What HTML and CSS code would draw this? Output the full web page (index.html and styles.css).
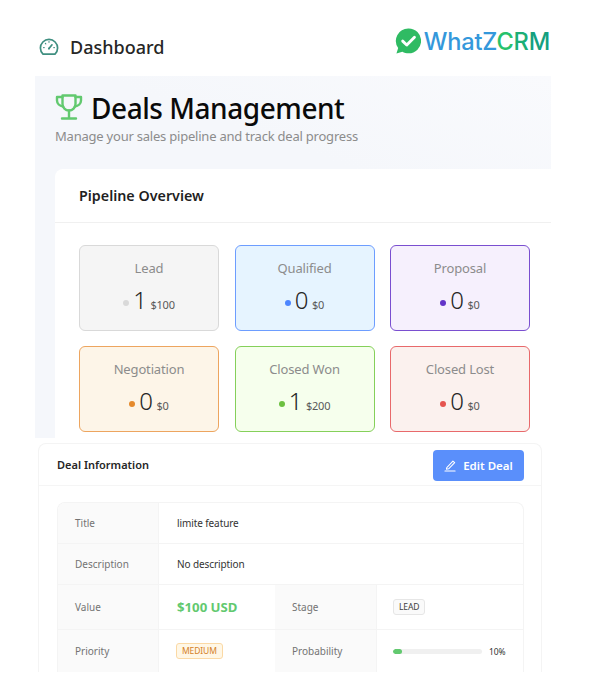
FILE: index.html
```html
<!DOCTYPE html>
<html lang="en">
<head>
<meta charset="utf-8">
<title>Deals Management</title>
<link rel="stylesheet" href="styles.css">
</head>
<body>
<div class="page">
  <header class="topbar">
    <div class="crumb">
      <svg class="gauge" viewBox="0 0 20 20" width="20" height="20" fill="none" stroke="#3f8f80" stroke-width="1.700" stroke-linecap="round">
        <path d="M4 17.200A8.600 8.600 0 1 1 16 17.200Z" stroke-linejoin="round"/>
        <path d="M10 11.500L13 7.800"/>
        <circle cx="10" cy="11.600" r="1" fill="#3f8f80" stroke="none"/>
        <path d="M4.600 10.600h.6M6.400 6.400l.4.4M10 4.600v.6M14.800 10.600h.6" stroke-width="1.200"/>
      </svg>
      <span class="crumb-text">Dashboard</span>
    </div>
    <div class="logo">
      <svg class="logo-mark" viewBox="0 0 27 27" width="26" height="26">
        <path d="M14.200 .5a12.900 12.900 0 0 1 0 25.800c-2.400 0-4.600-.6-6.500-1.700L1.500 26.500l1.800-5.700A12.900 12.900 0 0 1 14.200 .5Z" fill="#2fbb63"/>
        <path d="M8 13.600l4.200 4 8-8" fill="none" stroke="#fff" stroke-width="3" stroke-linecap="round" stroke-linejoin="round"/>
      </svg>
      <span class="logo-text"><span class="logo-blue">WhatZ</span><span class="logo-green">C</span><span class="logo-mid">R</span><span class="logo-teal">M</span></span>
    </div>
  </header>

  <section class="deals">
    <h1 class="deals-title">
      <svg class="trophy" viewBox="0 0 28 28" width="28" height="28" fill="none" stroke="#62c96f" stroke-width="2.400" stroke-linejoin="round" stroke-linecap="round">
        <path d="M7.500 2.500h13v8.500a6.500 6.500 0 0 1-13 0Z"/>
        <path d="M7.500 4H2v3.500c0 3 2.500 5.500 6.200 6M20.500 4H26v3.500c0 3-2.500 5.500-6.200 6"/>
        <path d="M14 17.500V25M7 25.500h14"/>
      </svg>
      <span>Deals Management</span>
    </h1>
    <p class="deals-sub">Manage your sales pipeline and track deal progress</p>

    <div class="pipeline">
      <h2 class="pipeline-head">Pipeline Overview</h2>
      <div class="stages">
        <div class="stage stage-lead"><div class="stage-name">Lead</div><div class="stage-stats"><i class="dot"></i><span class="count">1</span><span class="amount">$100</span></div></div>
        <div class="stage stage-qualified"><div class="stage-name">Qualified</div><div class="stage-stats"><i class="dot"></i><span class="count">0</span><span class="amount">$0</span></div></div>
        <div class="stage stage-proposal"><div class="stage-name">Proposal</div><div class="stage-stats"><i class="dot"></i><span class="count">0</span><span class="amount">$0</span></div></div>
        <div class="stage stage-negotiation"><div class="stage-name">Negotiation</div><div class="stage-stats"><i class="dot"></i><span class="count">0</span><span class="amount">$0</span></div></div>
        <div class="stage stage-won"><div class="stage-name">Closed Won</div><div class="stage-stats"><i class="dot"></i><span class="count">1</span><span class="amount">$200</span></div></div>
        <div class="stage stage-lost"><div class="stage-name">Closed Lost</div><div class="stage-stats"><i class="dot"></i><span class="count">0</span><span class="amount">$0</span></div></div>
      </div>
    </div>
  </section>

  <section class="info">
    <div class="info-head">
      <h3 class="info-title">Deal Information</h3>
      <button class="edit-btn" type="button">
        <svg viewBox="0 0 14 14" width="13" height="13" fill="none" stroke="#fff" stroke-width="1.100" stroke-linejoin="round" stroke-linecap="round">
          <path d="M3 9.200L9.600 2.200l1.900 1.800L5 10.600l-2.400.4Z"/>
          <path d="M1 13h11"/>
        </svg>
        <span>Edit Deal</span>
      </button>
    </div>
    <div class="info-body">
      <div class="table">
        <div class="cell label">Title</div>
        <div class="cell value span3">limite feature</div>
        <div class="cell label">Description</div>
        <div class="cell value span3">No description</div>
        <div class="cell label">Value</div>
        <div class="cell value money">$100 USD</div>
        <div class="cell label">Stage</div>
        <div class="cell value end"><span class="tag tag-lead">LEAD</span></div>
        <div class="cell label">Priority</div>
        <div class="cell value tight"><span class="tag tag-medium">MEDIUM</span></div>
        <div class="cell label">Probability</div>
        <div class="cell value end prob"><span class="bar"><span class="bar-fill"></span></span><span class="pct">10%</span></div>
      </div>
    </div>
  </section>
</div>
</body>
</html>
```

FILE: styles.css
```css
* { box-sizing: border-box; }
html, body { margin: 0; background: #fff; }
body {
  font-family: "Noto Sans", "Open Sans", sans-serif;
  color: #1f1f1f;
  width: 600px;
  height: 700px;
  overflow: hidden;
}
.page { width: 600px; height: 700px; overflow: hidden; }

.topbar {
  height: 76px;
  display: flex;
  justify-content: space-between;
  padding: 28px 50px 0 39px;
}
.crumb { display: flex; align-items: center; gap: 11px; height: 38px; }
.crumb-text { font-size: 18px; font-weight: 500; color: #262626; }
.logo { display: flex; align-items: center; gap: 3px; height: 26px; }
.logo-text { font-family: "Inter", sans-serif; font-size: 23.600px; font-weight: 500; letter-spacing: -.2px; line-height: 28px; margin-top: 2px; }
.logo-blue { color: #3498db; }
.logo-green { color: #27c26c; }
.logo-mid { color: #1cae76; }
.logo-teal { color: #14a07f; }

.deals {
  margin-left: 35px;
  width: 516px;
  height: 362px;
  background: linear-gradient(200deg, #f9fafd 0, #f5f7fb 30%);
  padding: 14px 0 0 20px;
  overflow: hidden;
}
.deals-title {
  margin: 0;
  display: flex;
  align-items: center;
  gap: 8px;
  font-size: 28px;
  font-weight: 500;
  letter-spacing: -.45px;
  line-height: 36px;
  color: #0a0a0a;
}
.trophy { flex: none; margin-top: -2px; }
.deals-sub { margin: 0; font-size: 13px; letter-spacing: -.22px; line-height: 20px; color: #8c8c8c; }

.pipeline {
  margin-top: 23px;
  background: #fff;
  border-radius: 8px 0 0 0;
  height: 270px;
}
.pipeline-head {
  margin: 0;
  height: 54px;
  padding: 0 24px;
  display: flex;
  align-items: center;
  font-size: 14.300px;
  font-weight: 600;
  color: #1f1f1f;
  border-bottom: 1px solid #f0f0f0;
}
.stages {
  display: grid;
  grid-template-columns: repeat(3, 140px);
  grid-auto-rows: 86px;
  column-gap: 15.500px;
  row-gap: 15px;
  padding: 22px 0 0 24px;
}
.stage {
  border: 1px solid;
  border-radius: 6px;
  display: flex;
  flex-direction: column;
  align-items: center;
  padding-top: 12px;
}
.stage-name { font-size: 13px; letter-spacing: -.15px; line-height: 20px; color: #8c8c8c; }
.stage-stats { display: flex; align-items: baseline; margin-top: 6px; height: 32px; }
.dot { width: 6px; height: 6px; border-radius: 50%; margin-right: 4px; align-self: center; margin-top: 5px; }
.count { font-size: 24px; font-weight: 300; line-height: 32px; letter-spacing: -1.500px; color: #262626; }
.amount { font-size: 11px; letter-spacing: -.2px; color: #595959; margin-left: 5px; }

.stage-lead { background: #f5f5f5; border-color: #d9d9d9; }
.stage-lead .dot { background: #d9d9d9; }
.stage-qualified { background: #e6f4ff; border-color: #6d9dff; }
.stage-qualified .dot { background: #4d86ff; }
.stage-proposal { background: #f6f0fd; border-color: #7a4fd0; }
.stage-proposal .dot { background: #6234c8; }
.stage-negotiation { background: #fdf5e8; border-color: #eda55f; }
.stage-negotiation .dot { background: #e58a2c; }
.stage-won { background: #f6ffed; border-color: #85d05a; }
.stage-won .dot { background: #6cc040; }
.stage-lost { background: #fbf1ee; border-color: #e8696b; }
.stage-lost .dot { background: #e5544f; }

.info {
  margin: 5px 0 0 38px;
  width: 504px;
  height: 229px;
  background: #fff;
  border: 1px solid #f4f4f4;
  border-bottom: 0;
  border-radius: 8px 8px 0 0;
  overflow: hidden;
}
.info-head {
  height: 42px;
  display: flex;
  align-items: center;
  justify-content: space-between;
  padding: 0 17px 0 18px;
  border-bottom: 1px solid #f5f5f5;
}
.info-title { margin: 0; font-size: 11px; font-weight: 600; color: #262626; }
.edit-btn {
  width: 91px;
  height: 31px;
  margin-top: 1px;
  border: 0;
  border-radius: 4px;
  background: #5a8ffb;
  color: #fff;
  font: 600 11.500px "Noto Sans", sans-serif;
  display: flex;
  align-items: center;
  justify-content: center;
  gap: 6px;
}
.info-body { padding: 16px 17px 0 18px; }
.table {
  display: grid;
  grid-template-columns: 101px 116px 102px 148px;
  grid-template-rows: 41px 41px 45px 43px;
  border: 1px solid #f4f4f4;
  border-bottom: 0;
  border-radius: 8px 8px 0 0;
  overflow: hidden;
  font-size: 10px;
}
.cell {
  display: flex;
  align-items: center;
  border-bottom: 1px solid #f4f4f4;
}
.label { background: #fafafa; color: #737373; padding-left: 17px; border-right: 1px solid #f4f4f4; }
.value { padding-left: 18px; color: #333; letter-spacing: -.1px; }
.end { padding-left: 16px; }
.tight { padding-left: 17px; }
.span3 { grid-column: span 3; }
.money { color: #62c96f; font-size: 13.200px; font-weight: 700; letter-spacing: 0; }
.tag {
  border: 1px solid;
  border-radius: 3px;
  font-size: 8.500px;
  line-height: 14px;
  padding: 0 5px;
}
.tag-lead { background: #fafafa; border-color: #e6e6e6; color: #404040; }
.tag-medium { background: #fff7e6; border-color: #fbd9a5; color: #d48128; }
.prob { gap: 7px; }
.bar { width: 89px; height: 5px; border-radius: 3px; background: #f0f0f0; overflow: hidden; display: block; }
.bar-fill { display: block; width: 9px; height: 5px; border-radius: 3px; background: #62c96f; }
.pct { font-size: 8.500px; color: #333; }
```
